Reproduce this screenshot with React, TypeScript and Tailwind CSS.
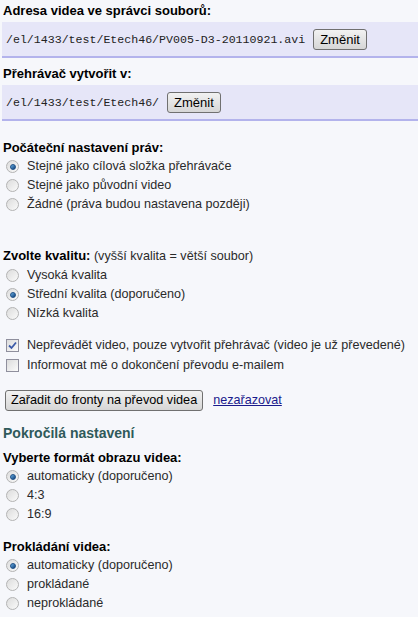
import * as React from "react";

const Radio: React.FC<{ checked?: boolean; label: string }> = ({ checked, label }) => (
  <div className="flex items-center h-[19px] pl-[6px]">
    <span className="flex items-center justify-center w-[13px] h-[13px] rounded-full border border-[#b3b3b3] bg-gradient-to-br from-[#dcdcdc] to-[#fafafa] shrink-0">
      {checked && <span className="w-[6px] h-[6px] rounded-full bg-gradient-to-br from-[#6bb2e6] to-[#0d3e78] border border-[#1d4f86]" />}
    </span>
    <span className="ml-[8px]">{label}</span>
  </div>
);

const Check: React.FC<{ checked?: boolean; label: string }> = ({ checked, label }) => (
  <div className="flex items-center h-[20px] pl-[6px]">
    <span className="flex items-center justify-center w-[13px] h-[13px] border border-[#8f8f9d] bg-gradient-to-br from-[#dcdcdc] to-[#fbfbfb] shrink-0">
      {checked && (
        <svg width="9" height="9" viewBox="0 0 9 9">
          <path d="M1 4.5 L3.5 7 L8 1.5" stroke="#3b5aa8" strokeWidth="1.8" fill="none" />
        </svg>
      )}
    </span>
    <span className="ml-[8px]">{label}</span>
  </div>
);

const Btn: React.FC<{ children: React.ReactNode; small?: boolean }> = ({ children, small }) => (
  <span
    className={
      "inline-flex items-center h-[21px] rounded-[3px] border border-[#707070] bg-gradient-to-b from-[#f2f2f2] to-[#d6d6d6] text-black " +
      (small ? "px-[5px] text-[12.7px]" : "px-[6px] text-[13px]")
    }
  >
    {children}
  </span>
);

export default function App() {
  return (
    <div className="w-[418px] h-[617px] overflow-hidden bg-[#f6f7fb] text-[12.6px] text-[#2a2a2a] font-['Liberation_Sans',Arial,sans-serif] leading-[19px]">
      <div className="pt-[1px] pl-[3px] font-bold text-[13px] text-black">Adresa videa ve správci souborů:</div>
      <div className="mt-[2px] ml-[2px] h-[36px] flex items-center gap-[8px] pl-[4px] bg-[#e6e6f8] border-b-2 border-[#b3b3ec]">
        <span className="font-['Liberation_Mono',monospace] text-[11.6px] text-[#222]">/el/1433/test/Etech46/PV005-D3-20110921.avi</span>
        <Btn>Změnit</Btn>
      </div>
      <div className="mt-[6px] pl-[3px] font-bold text-[13px] text-black">Přehrávač vytvořit v:</div>
      <div className="mt-[2px] ml-[2px] h-[36px] flex items-center gap-[8px] pl-[4px] bg-[#e6e6f8] border-b-2 border-[#b3b3ec]">
        <span className="font-['Liberation_Mono',monospace] text-[11.6px] text-[#222]">/el/1433/test/Etech46/</span>
        <Btn>Změnit</Btn>
      </div>

      <div className="mt-[17px] pl-[3px] font-bold text-[13px] text-black">Počáteční nastavení práv:</div>
      <Radio checked label="Stejné jako cílová složka přehrávače" />
      <Radio label="Stejné jako původní video" />
      <Radio label="Žádné (práva budou nastavena později)" />

      <div className="mt-[32px] pl-[3px] text-black">
        <span className="font-bold text-[13px]">Zvolte kvalitu:</span> <span className="text-[#2a2a2a]">(vyšší kvalita = větší soubor)</span>
      </div>
      <Radio label="Vysoká kvalita" />
      <Radio checked label="Střední kvalita (doporučeno)" />
      <Radio label="Nízká kvalita" />

      <div className="mt-[12px]">
        <Check checked label="Nepřevádět video, pouze vytvořit přehrávač (video je už převedené)" />
        <Check label="Informovat mě o dokončení převodu e-mailem" />
      </div>

      <div className="mt-[15px] pl-[5px] flex items-center gap-[10px]">
        <Btn small>Zařadit do fronty na převod videa</Btn>
        <a href="#" className="text-[#1a1a8c] underline">nezařazovat</a>
      </div>

      <div className="mt-[13px] pl-[3px] font-bold text-[14px] text-[#2f5a5a]">Pokročilá nastavení</div>
      <div className="mt-[5px] pl-[3px] font-bold text-[13px] text-black">Vyberte formát obrazu videa:</div>
      <Radio checked label="automaticky (doporučeno)" />
      <Radio label="4:3" />
      <Radio label="16:9" />

      <div className="mt-[13px] pl-[3px] font-bold text-[13px] text-black">Prokládání videa:</div>
      <Radio checked label="automaticky (doporučeno)" />
      <Radio label="prokládané" />
      <Radio label="neprokládané" />
    </div>
  );
}
